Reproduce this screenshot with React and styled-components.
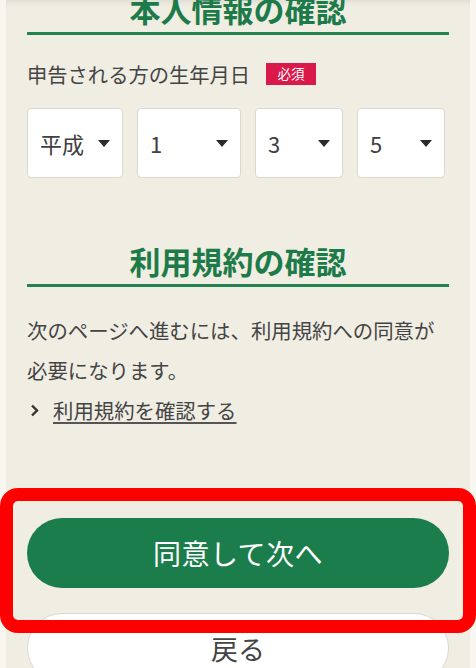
import React from "react";
import styled, { createGlobalStyle } from "styled-components";

const Global = createGlobalStyle`
  html, body { margin: 0; padding: 0; background: #f7f6f1; }
  body {
    font-family: "Noto Sans CJK JP", "Noto Sans", sans-serif;
    color: #3d3d3d;
    overflow: hidden;
  }
  * { box-sizing: border-box; }
`;

const Screen = styled.div`
  position: relative;
  width: 476px;
  height: 668px;
  overflow: hidden;
  padding: 0 6px;
  background: #f7f6f1;
`;

const Main = styled.main`
  height: 100%;
  background: #f0ede3;
  padding: 0 21px;
  display: flex;
  flex-direction: column;
  box-shadow: inset 0 6px 6px -4px rgba(0, 0, 0, 0.08);
`;

const Heading = styled.h2`
  margin: ${(p) => p.$mt}px 0 0;
  font-size: 31px;
  font-weight: 700;
  line-height: 46px;
  color: #1d7a49;
  text-align: center;
  border-bottom: 3px solid #23824f;
`;

const FieldLabel = styled.div`
  margin-top: 24px;
  display: flex;
  align-items: center;
  gap: 16px;
  font-size: 20.3px;
  line-height: 30px;
  color: #444;
`;

const Badge = styled.span`
  display: inline-flex;
  align-items: center;
  justify-content: center;
  width: 50px;
  height: 22px;
  background: #d8194a;
  color: #fff;
  font-size: 13.5px;
  line-height: 1;
`;

const SelectRow = styled.div`
  margin-top: 19px;
  display: flex;
  gap: 14px;
`;

const SelectBox = styled.div`
  width: ${(p) => p.$w}px;
  height: 70px;
  background: #fff;
  border: 1px solid #dcd8cf;
  border-radius: 4px;
  display: flex;
  align-items: center;
  justify-content: space-between;
  padding: 0 12px 0 12px;
  font-size: 22px;
  color: #404040;
`;

const Caret = styled.span`
  width: 0;
  height: 0;
  border-left: 6px solid transparent;
  border-right: 6px solid transparent;
  border-top: 7px solid #2b2b2b;
`;

const Paragraph = styled.p`
  margin: 23px 0 0;
  font-size: 20.4px;
  line-height: 40px;
  color: #444;
`;

const LinkRow = styled.a`
  display: flex;
  align-items: center;
  gap: 14px;
  padding-left: 3px;
  font-size: 20.4px;
  line-height: 40px;
  color: #444;
  text-decoration: none;
`;

const LinkText = styled.span`
  text-decoration: underline;
  text-underline-offset: 3px;
  text-decoration-thickness: 1.5px;
  text-decoration-color: #555;
`;

const PillButton = styled.button`
  width: 100%;
  height: 70px;
  flex-shrink: 0;
  border-radius: 35px;
  font-family: "Noto Sans CJK JP", "Noto Sans", sans-serif;
  margin-top: ${(p) => p.$mt}px;
  background: ${(p) => (p.$primary ? "#1b7d4b" : "#fff")};
  color: ${(p) => (p.$primary ? "#fff" : "#444")};
  border: ${(p) => (p.$primary ? "none" : "1.5px solid #dcd8cf")};
  font-size: ${(p) => (p.$primary ? 28 : 27)}px;
  font-weight: 400;
  letter-spacing: ${(p) => (p.$primary ? "0.5px" : "0")};
  padding: 0;
`;

const Highlight = styled.div`
  position: absolute;
  left: 0;
  top: 488px;
  width: 476px;
  height: 145px;
  border: 13px solid #ff0000;
  border-radius: 18px;
  pointer-events: none;
`;

const ChevronIcon = () => (
  <svg width="9" height="13" viewBox="0 0 9 13" aria-hidden="true">
    <path d="M2 1.5 L7 6.5 L2 11.5" fill="none" stroke="#333" strokeWidth="2.4" />
  </svg>
);

const selects = [
  { label: "平成", w: 96 },
  { label: "1", w: 104 },
  { label: "3", w: 88 },
  { label: "5", w: 88 },
];

export default function App() {
  return (
    <>
      <Global />
      <Screen>
        <Main>
          <Heading $mt={-14}>本人情報の確認</Heading>
          <FieldLabel>
            申告される方の生年月日
            <Badge>必須</Badge>
          </FieldLabel>
          <SelectRow>
            {selects.map((s) => (
              <SelectBox key={s.label} $w={s.w}>
                <span>{s.label}</span>
                <Caret />
              </SelectBox>
            ))}
          </SelectRow>
          <Heading $mt={60}>利用規約の確認</Heading>
          <Paragraph>
            次のページへ進むには、利用規約への同意が
            <br />
            必要になります。
          </Paragraph>
          <LinkRow href="#">
            <ChevronIcon />
            <LinkText>利用規約を確認する</LinkText>
          </LinkRow>
          <PillButton $primary $mt={88}>同意して次へ</PillButton>
          <PillButton $mt={25}>戻る</PillButton>
        </Main>
        <Highlight />
      </Screen>
    </>
  );
}
